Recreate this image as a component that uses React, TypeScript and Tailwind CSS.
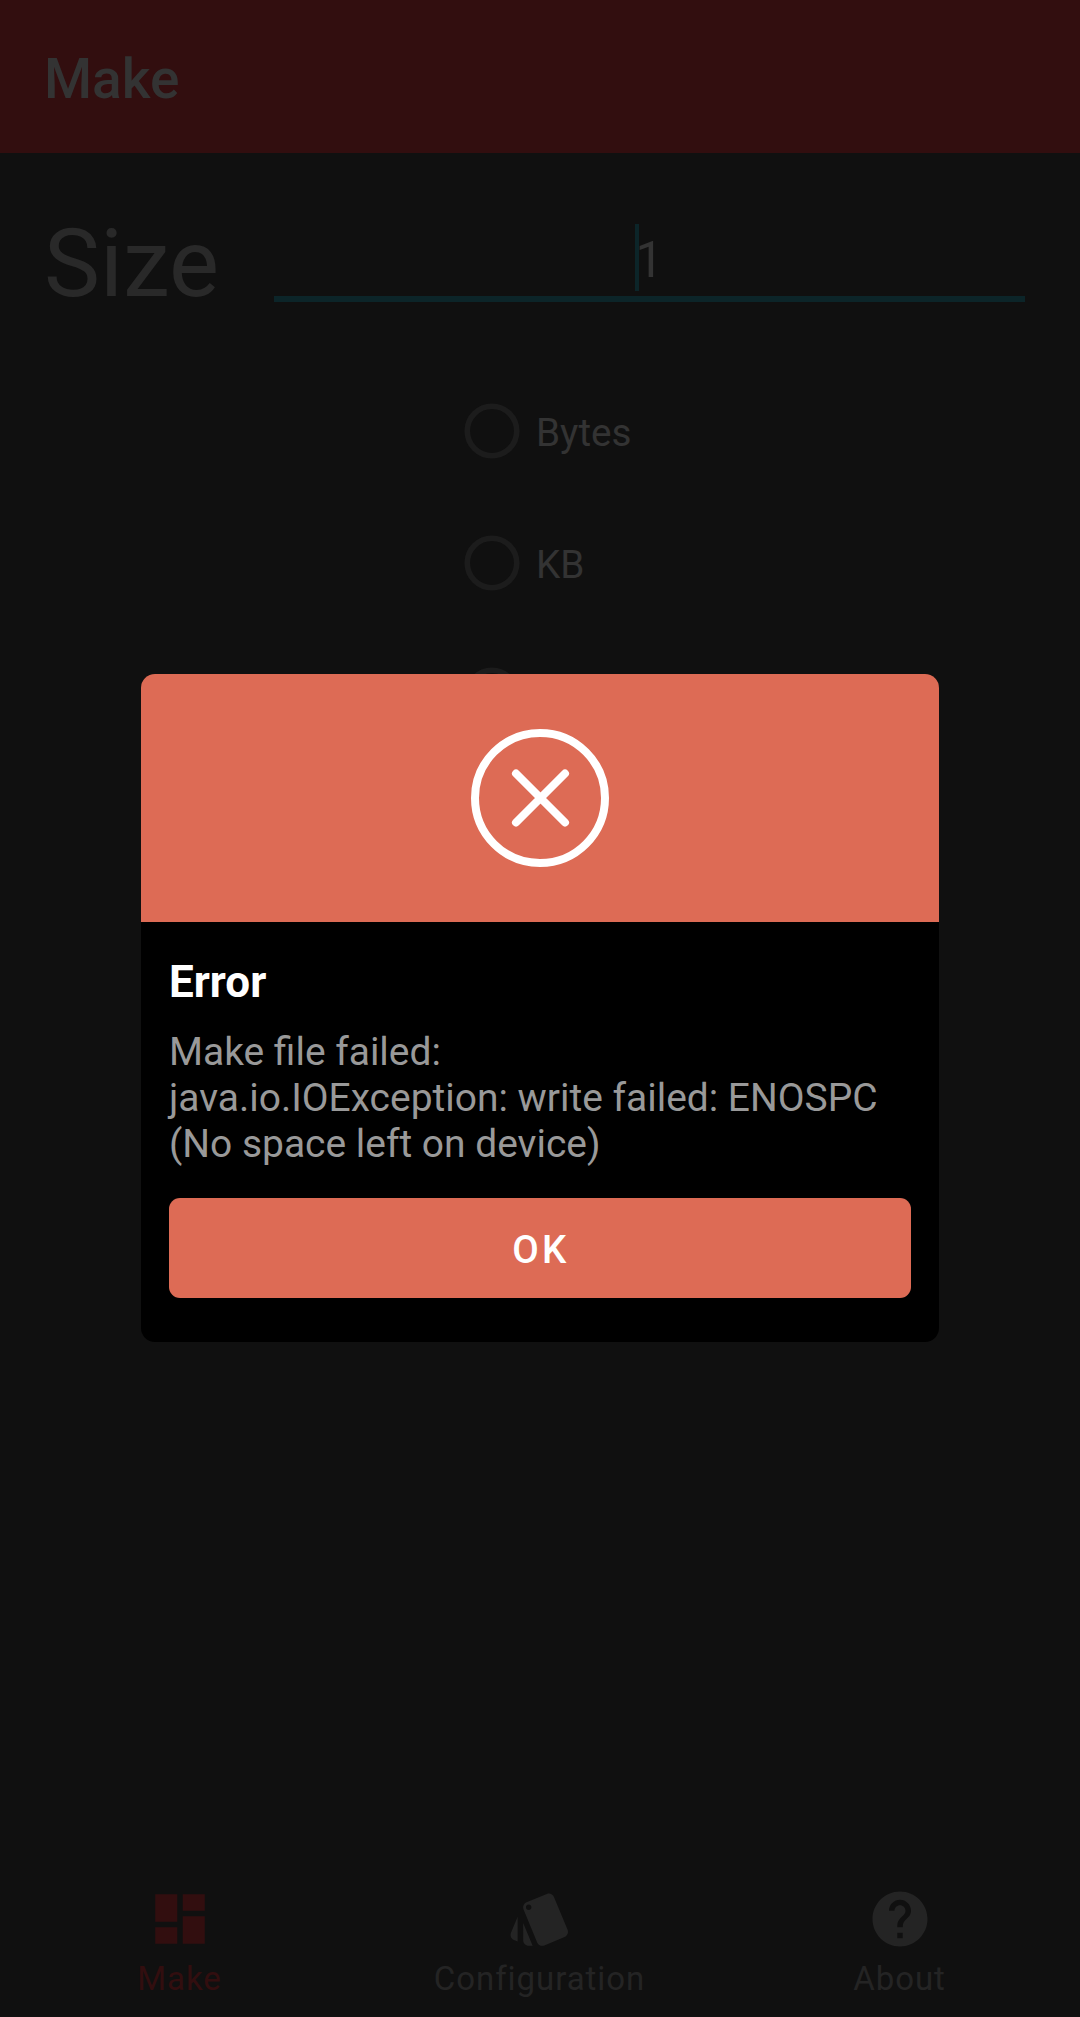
const units = ['Bytes', 'KB', ''];

const tabs = [
  {
    label: 'Make',
    color: 'text-[#320e0f]',
    path: 'M3 13h8V3H3v10zm0 8h8v-6H3v6zm10 0h8V11h-8v10zm0-18v6h8V3h-8z',
  },
  {
    label: 'Configuration',
    color: 'text-[#242424]',
    path: 'M2.53 19.65l1.34.56v-9.03l-2.43 5.86c-.41 1.02.08 2.19 1.09 2.61zm19.5-3.7L17.07 3.98c-.31-.75-1.04-1.21-1.81-1.23-.26 0-.53.04-.79.15L7.1 5.95c-.75.31-1.21 1.03-1.23 1.8-.01.27.04.54.15.8l4.96 11.97c.31.76 1.05 1.22 1.83 1.23.26 0 .52-.05.77-.15l7.36-3.05c1.02-.42 1.51-1.59 1.09-2.6zM7.88 8.75c-.55 0-1-.45-1-1s.45-1 1-1 1 .45 1 1-.45 1-1 1zm-2 11c0 1.1.9 2 2 2h1.45l-3.45-8.34v6.34z',
  },
  {
    label: 'About',
    color: 'text-[#242424]',
    path: 'M12 2C6.48 2 2 6.48 2 12s4.48 10 10 10 10-4.48 10-10S17.52 2 12 2zm1 17h-2v-2h2v2zm2.07-7.75l-.9.92C13.45 12.9 13 13.5 13 15h-2v-.5c0-1.1.45-2.1 1.17-2.83l1.24-1.26c.37-.36.59-.86.59-1.41 0-1.1-.9-2-2-2s-2 .9-2 2H8c0-2.21 1.79-4 4-4s4 1.79 4 4c0 .88-.36 1.68-.93 2.25z',
  },
];

function ErrorDialog() {
  return (
    <div className="absolute inset-0 flex items-start justify-center pt-[674px]">
      <div role="dialog" className="h-[668px] w-[798px] overflow-hidden rounded-[14px] bg-black">
        <div className="flex h-[248px] items-center justify-center bg-[#dd6b55]">
          <svg className="size-[138px]" viewBox="0 0 138 138" fill="none" stroke="#fff" strokeWidth="8">
            <circle cx="69" cy="69" r="65" />
            <path d="M45 44.5l49 49M94 44.5l-49 49" strokeLinecap="round" />
          </svg>
        </div>
        <div className="flex flex-col px-7 pt-[34px]">
          <h2 className="text-[44px] leading-[52px] font-bold text-white">Error</h2>
          <p className="mt-[21px] text-[38.95px] leading-[46px] whitespace-nowrap text-[#999]">
            Make file failed:
            <br />
            java.io.IOException: write failed: ENOSPC
            <br />
            (No space left on device)
          </p>
          <button className="mt-[31px] h-[100px] rounded-[11px] bg-[#dd6b55] pt-[3px] pl-[2px] text-[38.5px] font-medium tracking-[3.4px] text-white">
            OK
          </button>
        </div>
      </div>
    </div>
  );
}

export default function App() {
  return (
    <div className="relative flex h-[2017px] w-[1080px] flex-col overflow-hidden bg-[#101010] font-[Roboto,sans-serif]">
      <header className="flex h-[153px] items-center bg-[#320e0f] px-11 pt-[5px]">
        <h1 className="text-[55px] leading-[64px] font-medium text-[#333]">Make</h1>
      </header>

      <main className="flex flex-1 flex-col">
        <div className="flex h-[149px] items-end">
          <span className="-mb-[17px] ml-11 w-[230px] text-[94.3px] leading-[110px] text-[#292929]">Size</span>
          <div className="flex h-[78px] w-[751px] justify-center border-b-[6px] border-[#0c2529] pr-[3px]">
            <div className="flex h-[67px] items-center border-l-4 border-[#0c2529]">
              <span className="mt-[5px] -mr-[2px] -ml-[3px] text-[49.5px] leading-[58px] text-[#333]">1</span>
            </div>
          </div>
        </div>

        <div className="mt-[63px] ml-[464px] flex flex-col">
          {units.map((unit, i) => (
            <div key={i} className="flex h-[132px] items-center">
              <svg className="size-[56px]" viewBox="0 0 56 56" fill="none" stroke="#1c1c1c" strokeWidth="5.6">
                <circle cx="28" cy="28" r="24.75" />
              </svg>
              <span className="mt-[3px] ml-4 text-[38.7px] leading-[45px] text-[#333]">{unit}</span>
            </div>
          ))}
        </div>
      </main>

      <nav className="grid h-[154px] grid-cols-3 pt-[23px]">
        {tabs.map(({ label, path, color }) => (
          <div key={label} className={color + ' flex flex-col items-center'}>
            <svg className="size-[66px]" viewBox="0 0 24 24" fill="currentColor">
              <path d={path} />
            </svg>
            <span className="mt-[7px] mr-px text-[33px] leading-[39px] tracking-[0.95px]">{label}</span>
          </div>
        ))}
      </nav>

      <ErrorDialog />
    </div>
  );
}
